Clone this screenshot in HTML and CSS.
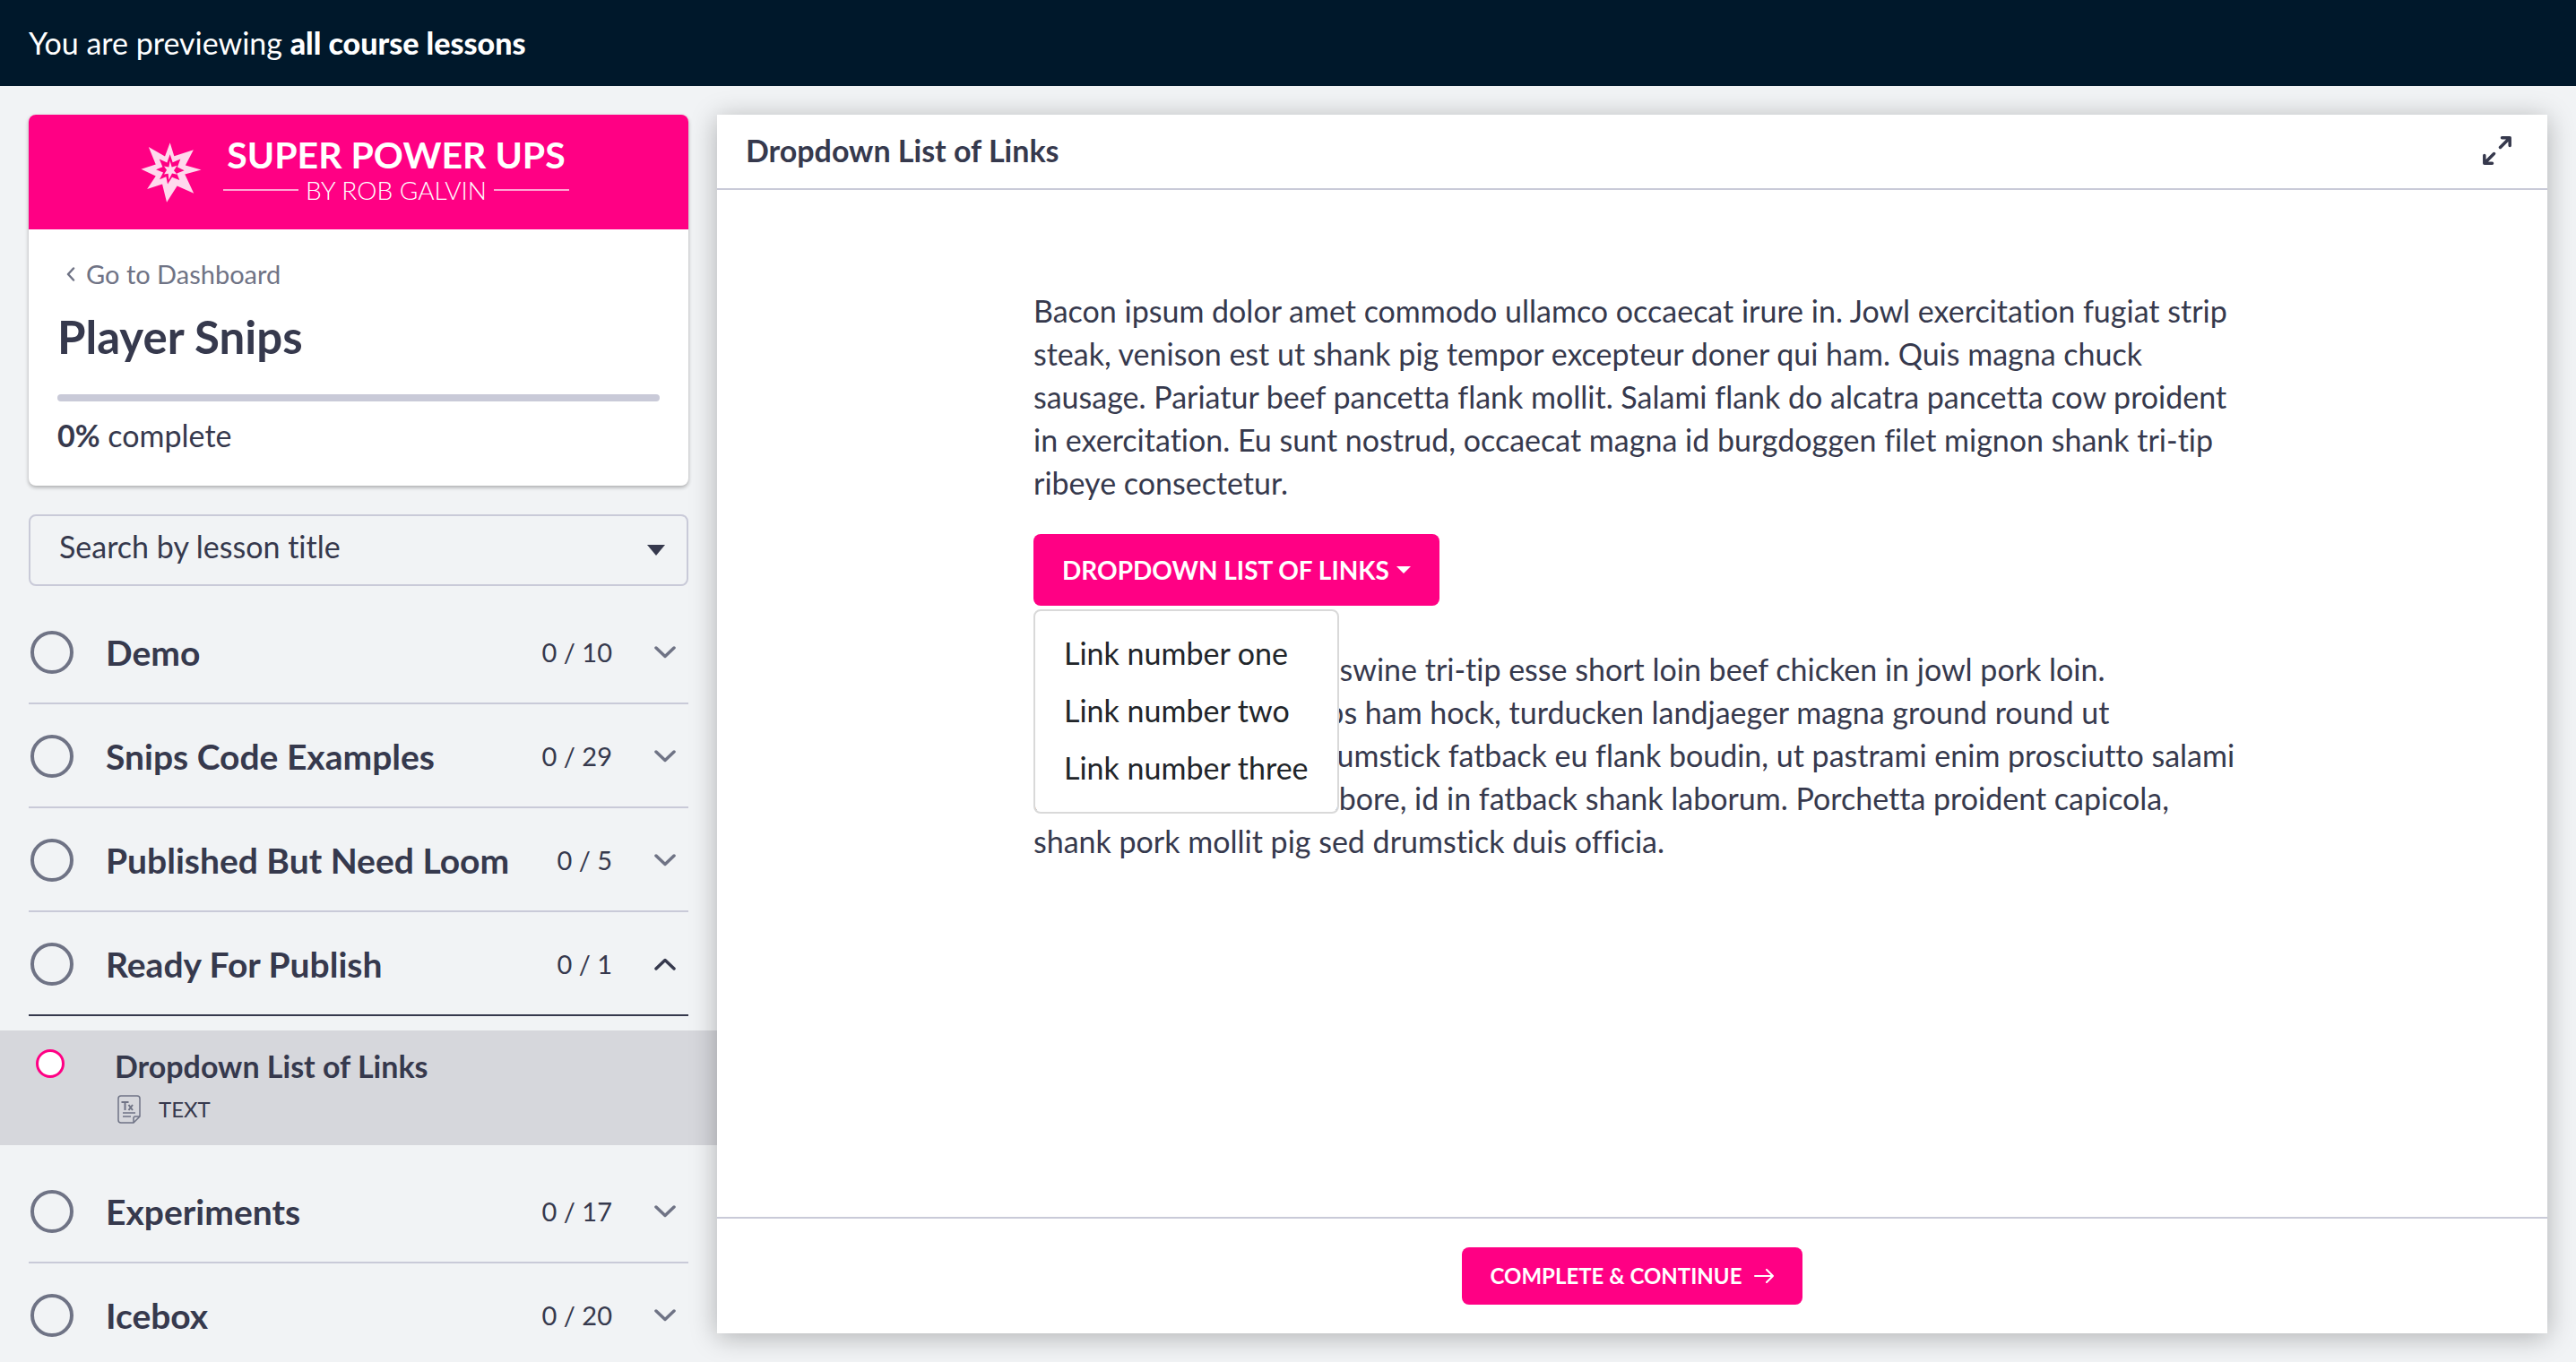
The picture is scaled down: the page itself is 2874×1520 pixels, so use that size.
FILE: index.html
```
<!DOCTYPE html>
<html lang="en">
<head>
<meta charset="utf-8">
<title>Dropdown List of Links – Player Snips</title>
<link rel="stylesheet" href="styles.css">
</head>
<body>
<svg class="sprite" aria-hidden="true">
  <symbol id="chevron" viewBox="0 0 24 14"><path d="M2 2l10 9.500 10-9.500" fill="none" stroke="currentColor" stroke-width="3.500" stroke-linecap="round" stroke-linejoin="round"/></symbol>
</svg>

<header class="preview-bar"><p>You are previewing <strong>all course lessons</strong></p></header>

<div class="player">
  <aside class="sidebar">
    <section class="course-card">
      <div class="brand">
        <svg class="brand-star" viewBox="20 26 204 202" aria-hidden="true">
          <path fill="#ffd9ed" fill-rule="evenodd" d="M118 27L132 72L197 51L170 103L223 118L168 133L198 197L142 172L107 227L92 166L41 183L70 139L21 116L70 100L46 41L101 73Z M118 66L108 94L82 82L93 108L71 117L95 127L83 150L105 141L110 166L125 143L150 153L141 130L166 120L143 109L153 82L127 93Z"/>
          <path fill="#ffd9ed" d="M118 88L124 109L142 104L131 120L142 134L125 130L114 152L112 131L98 133L107 119L98 106L114 109Z"/>
        </svg>
        <div class="brand-text">
          <span class="brand-name">SUPER POWER UPS</span>
          <span class="brand-by">BY ROB GALVIN</span>
        </div>
      </div>
      <div class="course-info">
        <a class="back-link" href="#"><svg viewBox="0 0 10 16" aria-hidden="true"><path d="M8 1.500L2 8l6 6.500" fill="none" stroke="currentColor" stroke-width="2.500" stroke-linecap="round" stroke-linejoin="round"/></svg>Go to Dashboard</a>
        <h1>Player Snips</h1>
        <div class="progress" role="progressbar" aria-label="Course progress" aria-valuenow="0" aria-valuemin="0" aria-valuemax="100"></div>
        <p class="progress-label"><strong>0%</strong> complete</p>
      </div>
    </section>

    <div class="search">
      <select aria-label="Search by lesson title"><option>Search by lesson title</option></select>
      <svg viewBox="0 0 20 12" aria-hidden="true"><path d="M0 0h20L10 12z" fill="currentColor"/></svg>
    </div>

    <nav class="chapters" aria-label="Lessons">
      <button class="chapter"><span class="ring"></span><span class="name">Demo</span><span class="count">0 / 10</span><svg class="chevron"><use href="#chevron"/></svg></button>
      <button class="chapter"><span class="ring"></span><span class="name">Snips Code Examples</span><span class="count">0 / 29</span><svg class="chevron"><use href="#chevron"/></svg></button>
      <button class="chapter"><span class="ring"></span><span class="name">Published But Need Loom</span><span class="count">0 / 5</span><svg class="chevron"><use href="#chevron"/></svg></button>
      <button class="chapter open" aria-expanded="true"><span class="ring"></span><span class="name">Ready For Publish</span><span class="count">0 / 1</span><svg class="chevron"><use href="#chevron"/></svg></button>
      <a class="lesson" href="#" aria-current="page">
        <span class="dot"></span>
        <span class="lesson-body">
          <span class="lesson-title">Dropdown List of Links</span>
          <span class="lesson-type">
            <svg viewBox="0 0 26 32" fill="none" stroke="currentColor" stroke-width="1.500" aria-hidden="true">
              <path d="M4 1h18q3 0 3 3v20l-7 7H4q-3 0-3-3V4q0-3 3-3z"/>
              <path d="M25 24h-5q-2 0-2 2v5M6 20h14M6 24h9"/>
              <path stroke-width="2" d="M4.500 8h8M8.500 8v9M12.500 11l4.500 6M17 11l-4.500 6"/>
            </svg>TEXT</span>
        </span>
      </a>
      <button class="chapter"><span class="ring"></span><span class="name">Experiments</span><span class="count">0 / 17</span><svg class="chevron"><use href="#chevron"/></svg></button>
      <button class="chapter"><span class="ring"></span><span class="name">Icebox</span><span class="count">0 / 20</span><svg class="chevron"><use href="#chevron"/></svg></button>
    </nav>
  </aside>

  <main class="panel">
    <header class="panel-head">
      <h2>Dropdown List of Links</h2>
      <button class="icon-button" aria-label="Full screen">
        <svg viewBox="0 0 32 32" fill="none" stroke="currentColor" stroke-width="3.500" stroke-linecap="round" stroke-linejoin="round"><path d="M19.500 12.500L30 2M21.500 1.800h8.700v8.700M12.500 19.500L2 30M1.800 21.500v8.700h8.700"/></svg>
      </button>
    </header>
    <div class="panel-body">
      <article class="content">
        <p>Bacon ipsum dolor amet commodo ullamco occaecat irure in. Jowl exercitation fugiat strip<br>steak, venison est ut shank pig tempor excepteur doner qui ham. Quis magna chuck<br>sausage. Pariatur beef pancetta flank mollit. Salami flank do alcatra pancetta cow proident<br>in exercitation. Eu sunt nostrud, occaecat magna id burgdoggen filet mignon shank tri-tip<br>ribeye consectetur.</p>
        <div class="dropdown">
          <button class="button" aria-expanded="true">DROPDOWN LIST OF LINKS<svg class="caret" viewBox="0 0 16 8" aria-hidden="true"><path d="M0 0h16L8 8z" fill="currentColor"/></svg></button>
          <ul class="menu">
            <li><a href="#">Link number one</a></li>
            <li><a href="#">Link number two</a></li>
            <li><a href="#">Link number three</a></li>
          </ul>
        </div>
        <p>Landjaeger doner beef swine tri-tip esse short loin beef chicken in jowl pork loin.<br>commodo et pork chops ham hock, turducken landjaeger magna ground round ut<br>consequat ball tip in drumstick fatback eu flank boudin, ut pastrami enim prosciutto salami<br>laboris leberkas ut in labore, id in fatback shank laborum. Porchetta proident capicola,<br>shank pork mollit pig sed drumstick duis officia.</p>
      </article>
    </div>
    <footer class="panel-foot">
      <button class="button small">COMPLETE &amp; CONTINUE<svg class="arrow" viewBox="0 0 22 16" fill="none" stroke="currentColor" stroke-width="2" stroke-linecap="round" stroke-linejoin="round" aria-hidden="true"><path d="M1 8h20M14 1l7 7-7 7"/></svg></button>
    </footer>
  </main>
</div>
</body>
</html>
```
FILE: styles.css
```
* { box-sizing: border-box; }

:root {
  --ink: #36394d;
  --muted: #6f7385;
  --line: #c9cad8;
  --page: #f1f3f5;
  --brand: #ff0084;
}

body {
  margin: 0;
  height: 100vh;
  display: flex;
  flex-direction: column;
  overflow: hidden;
  background: var(--page);
  color: var(--ink);
  font: 34px/48px Lato, "Open Sans", sans-serif;
  font-variant-ligatures: none;
}

h1, h2, p, ul { margin: 0; padding: 0; }
h1, h2 { font-weight: 700; }
button, select { font: inherit; color: inherit; border: 0; background: none; padding: 0; margin: 0; cursor: pointer; }
a { color: inherit; text-decoration: none; }
svg { display: block; flex: none; }
.sprite { position: absolute; width: 0; height: 0; }

.preview-bar { flex: none; background: #00182b; color: #fff; padding: 24px 32px; }
.preview-bar strong { font-weight: 900; }

.player {
  flex: 1;
  min-height: 0;
  display: grid;
  grid-template-columns: 800px minmax(0, 1fr);
  padding: 32px 32px 0 0;
}

/* Sidebar */
.sidebar { min-height: 0; overflow: hidden; margin-top: -8px; padding-top: 8px; }

.course-card {
  margin: 0 32px 32px;
  border-radius: 8px;
  background: #fff;
  box-shadow: 0 2px 4px rgba(0, 0, 0, .3);
}

.brand {
  height: 128px;
  padding-right: 8px;
  border-radius: 8px 8px 0 0;
  background: var(--brand);
  color: #fff;
  display: flex;
  align-items: center;
  justify-content: center;
  gap: 24px;
}
.brand-star { width: 68px; height: 67px; }
.brand-text { display: flex; flex-direction: column; align-items: stretch; }
.brand-name { font-size: 41px; line-height: 40px; font-weight: 700; text-align: center; }
.brand-by { display: flex; align-items: center; gap: 8px; font-size: 28px; line-height: 38px; font-weight: 300; }
.brand-by::before, .brand-by::after { content: ""; width: 84px; height: 2px; background: #ffa6d3; }

.course-info { padding: 30px 32px 32px; }
.back-link { display: flex; align-items: center; gap: 12px; padding-left: 10px; color: var(--muted); font-size: 29px; line-height: 40px; }
.back-link svg { width: 10px; height: 16px; }
h1 { font-size: 51px; line-height: 64px; margin-top: 18px; }
.progress { height: 8px; margin-top: 32px; border-radius: 4px; background: var(--line); }
.progress-label { margin-top: 14px; }

.search { display: grid; align-items: center; margin: 0 32px; color: var(--ink); }
.search > * { grid-area: 1 / 1; }
.search select {
  appearance: none;
  width: 100%;
  height: 80px;
  padding: 0 80px 8px 32px;
  border: 2px solid var(--line);
  border-radius: 8px;
}
.search svg { justify-self: end; width: 20px; height: 12px; margin-right: 26px; pointer-events: none; }

.chapters { display: flex; flex-direction: column; padding-top: 16px; }
.chapter {
  height: 116px;
  margin: 0 32px;
  padding: 2px 14px 0 2px;
  border-bottom: 2px solid var(--line);
  display: flex;
  align-items: center;
  text-align: left;
}
.chapter.open { border-color: var(--ink); }
.ring { flex: none; width: 48px; height: 48px; border: 4px solid var(--muted); border-radius: 50%; }
.name { flex: 1; margin-left: 36px; font-size: 39px; font-weight: 700; white-space: nowrap; }
.count { font-size: 29px; }
.chevron { width: 24px; height: 14px; margin-left: 47px; color: var(--muted); }
.open .chevron { color: var(--ink); transform: rotate(180deg); }

.lesson { display: flex; align-items: flex-start; height: 128px; margin: 16px 0; padding: 16px 40px; background: #d6d7dc; }
.dot { flex: none; width: 32px; height: 32px; margin-top: 5px; border: 3px solid var(--brand); border-radius: 50%; background: #fff; }
.lesson-body { display: flex; flex-direction: column; margin-left: 56px; }
.lesson-title { font-weight: 700; }
.lesson-type { display: flex; align-items: center; gap: 20px; padding-left: 3px; font-size: 24px; }
.lesson-type svg { width: 26px; height: 32px; color: var(--muted); }

/* Lesson panel */
.panel {
  display: flex;
  flex-direction: column;
  min-height: 0;
  margin-bottom: 32px;
  background: #fff;
  box-shadow: 0 4px 28px rgba(0, 0, 0, .28);
  z-index: 1;
}
.panel-head { display: flex; align-items: center; justify-content: space-between; height: 84px; padding: 0 40px 2px 32px; border-bottom: 2px solid var(--line); }
h2 { font-size: 34px; }
.icon-button svg { width: 32px; height: 32px; }
.panel-body { flex: 1; padding: 111px 32px 32px; }
.content { max-width: 1336px; margin: 0 auto; white-space: nowrap; }

.button {
  display: inline-flex;
  align-items: center;
  height: 80px;
  padding: 0 32px;
  border-radius: 8px;
  background: var(--brand);
  color: #fff;
  font-size: 28px;
  line-height: 40px;
  font-weight: 700;
}
.button.small { height: 64px; font-size: 24px; }
.caret { width: 16px; height: 8px; margin-left: 8px; }
.arrow { width: 22px; height: 16px; margin-left: 14px; }

.dropdown { position: relative; display: flex; margin: 33px 0 47px; }
.menu {
  position: absolute;
  top: 100%;
  left: 0;
  margin-top: 4px;
  padding: 15px 0 17px;
  border: 2px solid #d9d9d9;
  border-radius: 8px;
  background: #fff;
  background-clip: padding-box;
  color: #212529;
  list-style: none;
}
.menu a { display: block; padding: 8px 32px; }

.panel-foot { display: flex; justify-content: center; padding: 32px; border-top: 2px solid var(--line); }
```
